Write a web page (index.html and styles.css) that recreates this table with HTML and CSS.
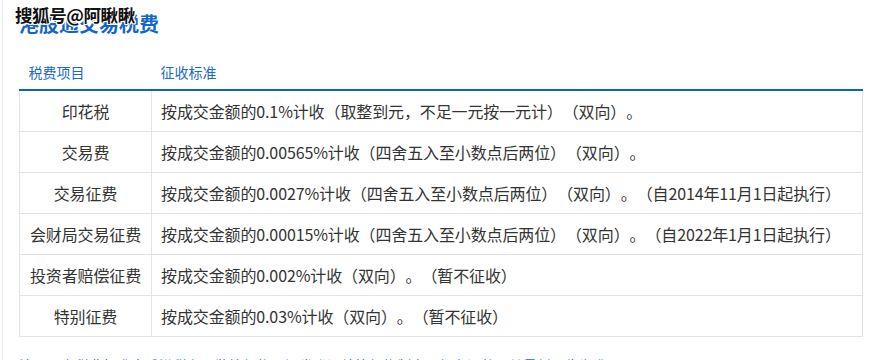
FILE: index.html
```html
<!DOCTYPE html>
<html lang="zh-CN">
<head>
<meta charset="utf-8">
<link rel="stylesheet" href="styles.css">
</head>
<body>
<div class="page">
  <h2 class="title">港股通交易税费</h2>
  <div class="watermark">搜狐号@阿瞅瞅</div>
  <table class="fees">
    <thead>
      <tr><th class="c1">税费项目</th><th class="c2">征收标准</th></tr>
    </thead>
    <tbody>
      <tr><td class="c1">印花税</td><td class="c2">按成交金额的0.1%计收（取整到元，不足一元按一元计）（双向）。</td></tr>
      <tr><td class="c1">交易费</td><td class="c2">按成交金额的0.00565%计收（四舍五入至小数点后两位）（双向）。</td></tr>
      <tr><td class="c1">交易征费</td><td class="c2">按成交金额的0.0027%计收（四舍五入至小数点后两位）（双向）。（自2014年11月1日起执行）</td></tr>
      <tr><td class="c1">会财局交易征费</td><td class="c2">按成交金额的0.00015%计收（四舍五入至小数点后两位）（双向）。（自2022年1月1日起执行）</td></tr>
      <tr><td class="c1">投资者赔偿征费</td><td class="c2">按成交金额的0.002%计收（双向）。（暂不征收）</td></tr>
      <tr><td class="c1">特别征费</td><td class="c2">按成交金额的0.03%计收（双向）。（暂不征收）</td></tr>
    </tbody>
  </table>
  <p class="note">注：以上税费标准由香港税务、监管机构及证券登记结算机构制定，如有调整以其最新公告为准。</p>
</div>
</body>
</html>
```
FILE: styles.css
```css
html, body {
  margin: 0;
  padding: 0;
  background: #fff;
}
body {
  font-family: "Noto Sans CJK SC", "Noto Sans", sans-serif;
  color: #333;
  overflow: hidden;
  height: 360px;
  text-spacing-trim: space-all;
}
.page {
  position: relative;
  margin-left: 2px;
  border-left: 1px solid #ececec;
  padding: 10px 0 0 16px;
  width: 845px;
  min-height: 400px;
}
.title {
  margin: 0;
  font-size: 20px;
  line-height: 28px;
  font-weight: bold;
  color: #1366c9;
}
.watermark {
  position: absolute;
  left: 12px;
  top: 2px;
  font-size: 17.5px;
  line-height: 26px;
  font-weight: bold;
  color: #111;
  letter-spacing: -0.4px;
  text-shadow: 1px 0 0 #fff, -1px 0 0 #fff, 0 1px 0 #fff, 0 -1px 0 #fff,
    1px 1px 0 #fff, -1px -1px 0 #fff, 1px -1px 0 #fff, -1px 1px 0 #fff;
}
.fees {
  margin-top: 23px;
  border-collapse: collapse;
  width: 844px;
  font-size: 16px;
}
.fees th {
  font-weight: normal;
  font-size: 14px;
  color: #1a6acb;
  text-align: left;
  height: 28px;
  padding: 0 0 0 9px;
  vertical-align: top;
  line-height: 22px;
  border-bottom: 2px solid #0b63c9;
}
.fees td {
  height: 40px;
  padding: 0 0 0 9px;
  border: 1px solid #e3e3e3;
  line-height: 22px;
  vertical-align: middle;
  white-space: nowrap;
  letter-spacing: -0.12px;
}
.fees td.c1 {
  width: 123px;
  text-align: center;
  padding: 0;
}
.fees th.c1 {
  width: 123px;
}
.note {
  margin: 18px 0 0 0;
  font-size: 14px;
  color: #1a6acb;
}
```
